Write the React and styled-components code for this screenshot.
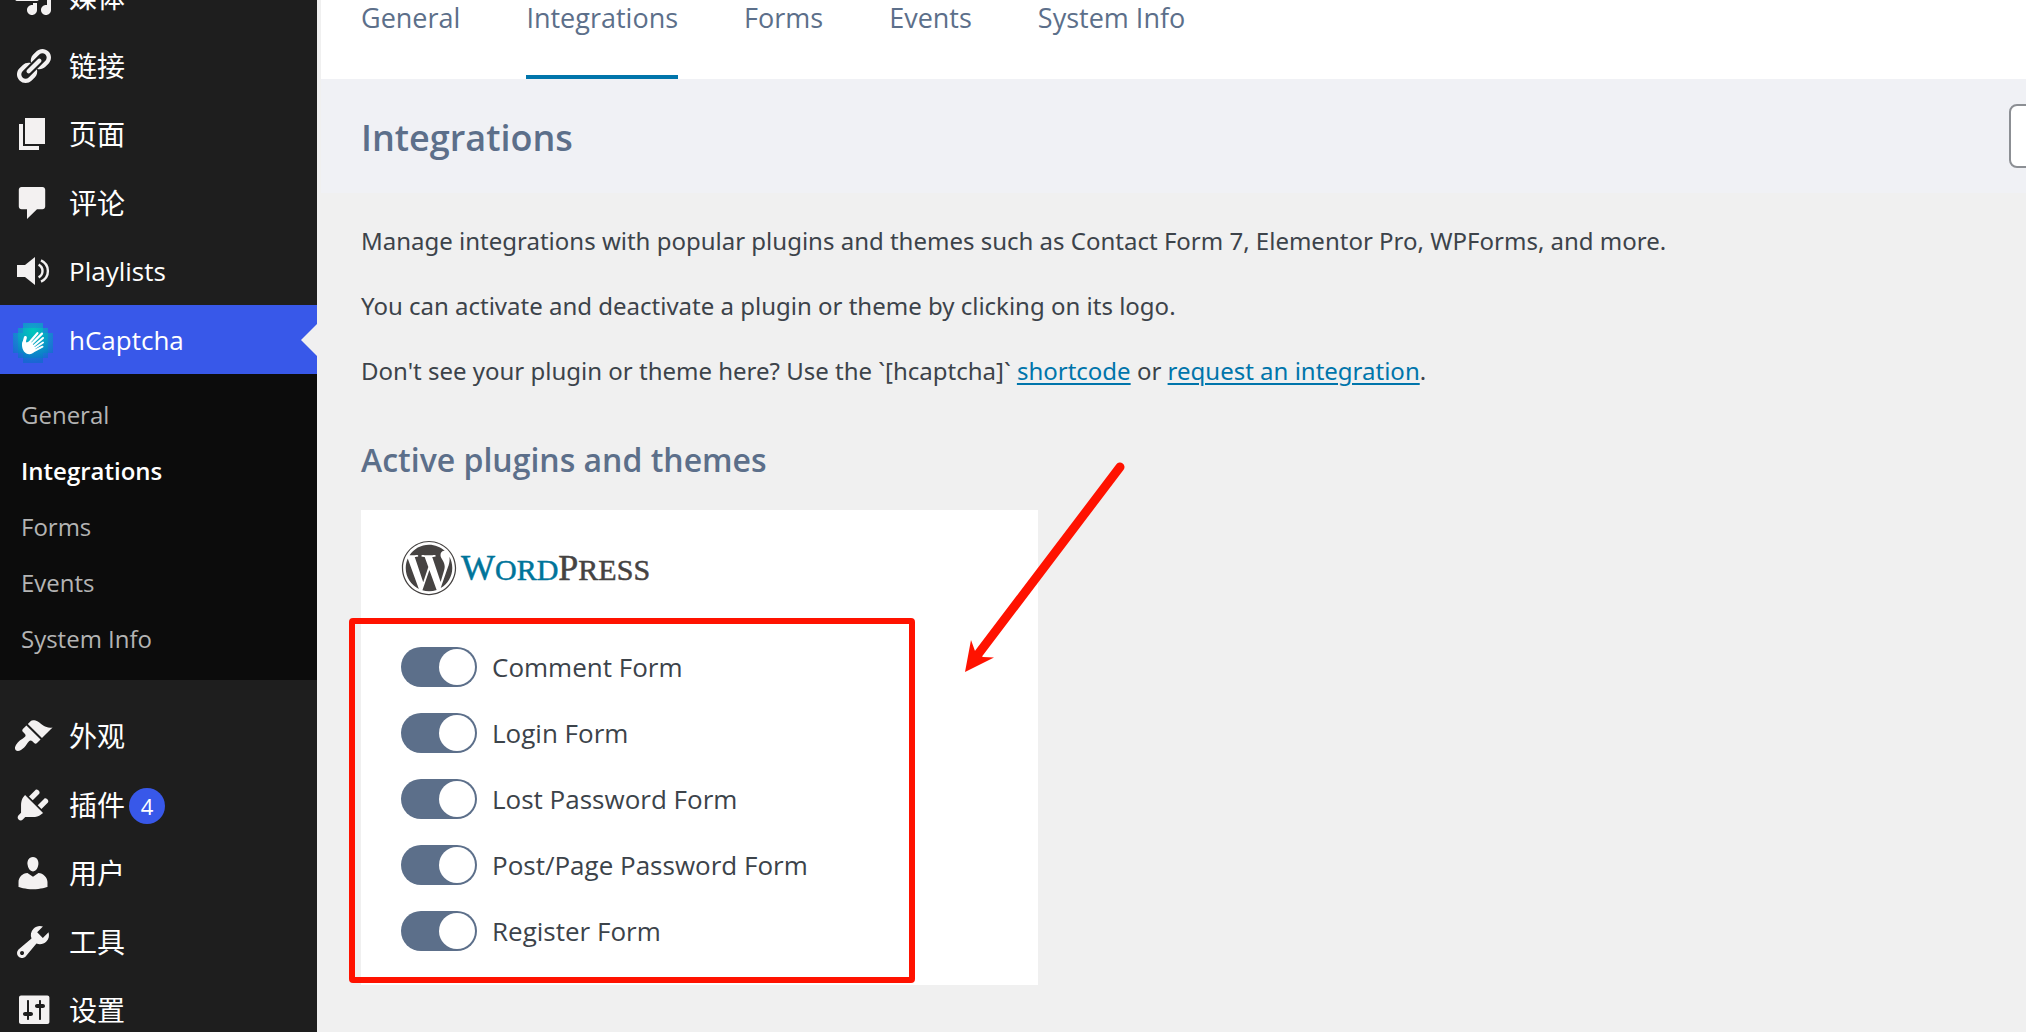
import React from "react";
import styled, { createGlobalStyle } from "styled-components";
import { FaWordpress } from "react-icons/fa";

const paths = {
  media:
    "M13 11V4c0-.55-.45-1-1-1h-1.67L9 1H5L3.67 3H2c-.55 0-1 .45-1 1v7c0 .55.45 1 1 1h10c.55 0 1-.45 1-1zM7 4.5c1.38 0 2.5 1.12 2.5 2.5S8.38 9.5 7 9.5 4.5 8.38 4.5 7 5.62 4.5 7 4.5zM14 6h5v10.5c0 1.38-1.12 2.5-2.5 2.5S14 17.88 14 16.5s1.12-2.5 2.5-2.5c.17 0 .34.02.5.05V9h-3V6zm-4 8.05V13h2v3.5c0 1.38-1.12 2.5-2.5 2.5S7 17.88 7 16.5 8.12 14 9.5 14c.17 0 .34.02.5.05z",
  links:
    "M17.74 2.76c1.68 1.69 1.68 4.41 0 6.1l-1.53 1.52c-1.12 1.12-2.7 1.47-4.14 1.09l2.62-2.61.76-.77.76-.76c.84-.84.84-2.2 0-3.04-.84-.85-2.2-.85-3.04 0l-.77.76-3.38 3.38c-.37-1.44-.02-3.02 1.1-4.14l1.52-1.53c1.69-1.68 4.42-1.68 6.1 0zM8.59 13.43l5.34-5.34c.42-.42.42-1.1 0-1.52-.44-.43-1.13-.39-1.53 0l-5.33 5.34c-.42.42-.42 1.1 0 1.52.44.43 1.13.39 1.52 0zm-.76 2.29l4.14-4.15c.38 1.44.03 3.02-1.09 4.14l-1.52 1.53c-1.69 1.68-4.41 1.68-6.1 0-1.68-1.68-1.68-4.42 0-6.1l1.53-1.52c1.12-1.12 2.7-1.47 4.14-1.1l-4.14 4.15c-.85.84-.85 2.2 0 3.05.84.84 2.2.84 3.04 0z",
  page: "M6 15V2h10v13H6zm-1 1h8v2H3V5h2v11z",
  comments:
    "M4.3 2h10.4c.8 0 1.4.6 1.4 1.4v8.3c0 .8-.6 1.4-1.4 1.4H12L7 18v-4.9H4.3c-.8 0-1.4-.6-1.4-1.4V3.4C2.9 2.6 3.5 2 4.3 2z",
  appearance:
    "M14.48 11.06L7.41 3.99l1.5-1.5c.5-.56 2.3-.47 3.51.32 1.21.8 1.43 1.28 2.91 2.1 1.18.64 2.45 1.26 4.45.85zm-.71.71L6.7 4.7 4.93 6.47c-.39.39-.39 1.02 0 1.41l1.06 1.06c.39.39.39 1.03 0 1.42-.6.6-1.43 1.11-2.21 1.69-.35.26-.7.53-1.01.84C1.43 14.23.4 16.08 1.4 17.07c.99 1 2.84-.03 4.18-1.36.31-.31.58-.66.85-1.02.57-.78 1.08-1.61 1.69-2.21.39-.39 1.02-.39 1.41 0l1.06 1.06c.39.39 1.02.39 1.41 0z",
  plugins:
    "M13.11 4.36L9.87 7.6 8 5.73l3.24-3.24c.35-.34 1.05-.2 1.56.32.52.51.66 1.21.31 1.55zm-8 1.77l.91-1.12 9.01 9.01-1.19.84c-.71.71-2.63 1.16-3.82 1.16H6.14L4.9 17.26c-.59.59-1.54.59-2.12 0-.59-.58-.59-1.53 0-2.12l1.24-1.24v-3.88c0-1.13.4-3.19 1.09-3.89zm7.26 3.97l3.24-3.24c.34-.35 1.04-.21 1.55.31.52.51.66 1.21.31 1.55l-3.24 3.25z",
  users:
    "M10 9.25c-2.27 0-2.73-3.44-2.73-3.44C7 4.02 7.82 2 9.97 2c2.16 0 2.98 2.02 2.71 3.81 0 0-.41 3.44-2.68 3.44zm0 2.57L12.72 10c2.39 0 4.52 2.33 4.52 4.53v2.49s-3.65 1.13-7.24 1.13c-3.65 0-7.24-1.13-7.24-1.13v-2.49c0-2.25 1.94-4.48 4.47-4.48z",
  tools:
    "M16.68 9.77c-1.34 1.34-3.3 1.67-4.95.99l-5.41 6.52c-.99.99-2.59.99-3.58 0s-.99-2.59 0-3.57l6.52-5.42c-.68-1.65-.35-3.61.99-4.95 1.28-1.28 3.12-1.62 4.72-1.06l-2.89 2.89 2.82 2.82 2.86-2.87c.53 1.58.18 3.39-1.08 4.65zM3.81 16.21c.4.39 1.04.39 1.43 0 .4-.4.4-1.04 0-1.43-.39-.4-1.03-.4-1.43 0-.39.39-.39 1.03 0 1.43z",
  settings:
    "M18.2 16V3.7c0-.55-.45-1-1-1H4c-.55 0-1 .45-1 1V16c0 .55.45 1 1 1h13.2c.55 0 1-.45 1-1zM8 11h1c.55 0 1 .45 1 1s-.45 1-1 1H8v1.5c0 .28-.22.5-.5.5s-.5-.22-.5-.5V13H6c-.55 0-1-.45-1-1s.45-1 1-1h1V5.5c0-.28.22-.5.5-.5s.5.22.5.5V11zm5-2h-1c-.55 0-1-.45-1-1s.45-1 1-1h1V5.5c0-.28.22-.5.5-.5s.5.22.5.5V7h1c.55 0 1 .45 1 1s-.45 1-1 1h-1v5.5c0 .28-.22.5-.5.5s-.5-.22-.5-.5V9z",
};

const DashIcon = ({ name }) => (
  <svg width="40" height="40" viewBox="0 0 20 20" fill="#f3f1f1" aria-hidden="true">
    <path d={paths[name]} />
  </svg>
);

const VolumeIcon = () => (
  <svg width="40" height="40" viewBox="0 0 20 20" aria-hidden="true">
    <path d="M2 7h4l5-4v14l-5-4H2z" fill="#f3f1f1" />
    <g fill="none" stroke="#f3f1f1" strokeWidth="1.2">
      <path d="M12.8 6.8c2.6 1.4 2.6 5 0 6.4" />
      <path d="M14 4.7c4.6 2.2 4.6 8.4 0 10.6" />
    </g>
  </svg>
);

const HCaptchaIcon = () => (
  <svg width="40" height="46" viewBox="0 -6 40 46" aria-hidden="true">
    <defs>
      <radialGradient id="hcap" cx="20" cy="8" r="31" gradientUnits="userSpaceOnUse">
        <stop offset="0" stopColor="#00c8bb" />
        <stop offset="0.5" stopColor="#0a9fc6" />
        <stop offset="1" stopColor="#0d6ccb" />
      </radialGradient>
    </defs>
    <g fill="url(#hcap)" shapeRendering="crispEdges">
      <path
        opacity="0.7"
        d="M10 0h20v5h5v5h5v20h-5v5h-5v5H10v-5H5v-5H0V10h5V5h5z"
      />
      <path d="M10 5h20v5h5v20h-5v5H10v-5H5V10h5z" />
    </g>
    <g stroke="#fff" strokeLinecap="round" fill="none">
      <path d="M16 20l8.400-9.800" strokeWidth="2.2" />
      <path d="M18 21.500l11-10.900" strokeWidth="2.2" />
      <path d="M20 23.500l10-8.500" strokeWidth="2.1" />
      <path d="M20.500 26l9.500-6.500" strokeWidth="2" />
      <path d="M20 28.500l9.500-4.800" strokeWidth="2" />
      <path d="M12.400 14.500l-1.900 7" strokeWidth="3" />
    </g>
    <path
      d="M9 22c0-2.500 1-4.500 2.500-6l2 3.500 4-1.500 4.500 6.500c1 2.500-1.500 6.500-5.500 6.700C12 31.300 9 27 9 22z"
      fill="#fff"
    />
  </svg>
);

const SideLink = ({ icon, label, cjk, badge, current }) => (
  <SideItem>
    <SideAnchor href="#" $current={current}>
      {icon}
      <SideLabel $cjk={cjk}>{label}</SideLabel>
      {badge && <Badge>{badge}</Badge>}
    </SideAnchor>
  </SideItem>
);

const submenu = ["General", "Integrations", "Forms", "Events", "System Info"];

const forms = [
  "Comment Form",
  "Login Form",
  "Lost Password Form",
  "Post/Page Password Form",
  "Register Form",
];

const App = () => {
  return (
    <>
      <GlobalStyle />
      <Layout>
        <Sidebar>
          <TopMenu>
            <SideLink icon={<DashIcon name="media" />} label="媒体" cjk />
            <SideLink icon={<DashIcon name="links" />} label="链接" cjk />
            <SideLink icon={<DashIcon name="page" />} label="页面" cjk />
            <SideLink icon={<DashIcon name="comments" />} label="评论" cjk />
            <SideLink icon={<VolumeIcon />} label="Playlists" />
            <SideLink icon={<HCaptchaIcon />} label="hCaptcha" current />
          </TopMenu>
          <Submenu>
            {submenu.map((item) => (
              <li key={item}>
                <SubmenuLink href="#" $current={item === "Integrations"}>
                  {item}
                </SubmenuLink>
              </li>
            ))}
          </Submenu>
          <BottomMenu>
            <SideLink icon={<DashIcon name="appearance" />} label="外观" cjk />
            <SideLink icon={<DashIcon name="plugins" />} label="插件" cjk badge="4" />
            <SideLink icon={<DashIcon name="users" />} label="用户" cjk />
            <SideLink icon={<DashIcon name="tools" />} label="工具" cjk />
            <SideLink icon={<DashIcon name="settings" />} label="设置" cjk />
          </BottomMenu>
        </Sidebar>
        <Main>
          <Tabs>
            {submenu.map((item) => (
              <Tab key={item} href="#" $current={item === "Integrations"}>
                {item}
              </Tab>
            ))}
          </Tabs>
          <HeaderBar>
            <PageTitle>Integrations</PageTitle>
            <SearchInput type="search" aria-label="Search plugins and themes" />
          </HeaderBar>
          <Content>
            <Intro>
              <p>
                Manage integrations with popular plugins and themes such as
                Contact Form 7, Elementor Pro, WPForms, and more.
              </p>
              <p>
                You can activate and deactivate a plugin or theme by clicking on
                its logo.
              </p>
              <p>
                Don't see your plugin or theme here? Use the `[hcaptcha]`{" "}
                <a href="#">shortcode</a> or{" "}
                <a href="#">request an integration</a>.
              </p>
            </Intro>
            <SectionTitle>Active plugins and themes</SectionTitle>
            <Card>
              <Logo>
                <FaWordpress size={56} color="#464342" />
                <Wordmark>
                  <Blue>
                    W<small>ORD</small>
                  </Blue>
                  P<small>RESS</small>
                </Wordmark>
              </Logo>
              <ToggleList>
                {forms.map((form) => (
                  <ToggleLabel key={form}>
                    <Toggle type="checkbox" defaultChecked />
                    {form}
                  </ToggleLabel>
                ))}
              </ToggleList>
              <Arrow width="170" height="220" viewBox="0 0 170 220" aria-hidden="true">
                <path d="M160 9L19 195" stroke="#ff1200" strokeWidth="9" strokeLinecap="round" />
                <path d="M5 214l6-32 4 11 8 6 11 .5z" fill="#ff1200" />
              </Arrow>
            </Card>
          </Content>
        </Main>
      </Layout>
    </>
  );
};

const GlobalStyle = createGlobalStyle`
  *, *::before, *::after {
    box-sizing: border-box;
  }
  body {
    margin: 0;
    background-color: #f0f0f0;
    color: #3c434a;
    font-family: "Open Sans", "Noto Sans CJK SC", sans-serif;
  }
  ul, p, h1, h2 {
    margin: 0;
    padding: 0;
  }
  ul {
    list-style: none;
  }
  a {
    text-decoration: none;
  }
`;

const Layout = styled.div`
  display: flex;
  gap: 4px;
  height: 100vh;
  overflow: hidden;
`;

const Sidebar = styled.nav`
  flex: 0 0 317px;
  background-color: #1e1e1e;
`;

const SideItem = styled.li`
  height: 68px;
`;

const TopMenu = styled.ul`
  /* the menu is scrolled up under the window edge */
  margin-top: -37px;
  ${SideItem}:nth-child(even) {
    height: 69px;
  }
`;

const BottomMenu = styled.ul`
  padding-top: 22px;
  ${SideItem}:nth-child(even) {
    height: 69px;
  }
`;

const SideAnchor = styled.a`
  position: relative;
  display: flex;
  align-items: center;
  height: 100%;
  padding-left: 13px;
  background-color: ${({ $current }) => ($current ? "#3858e9" : "transparent")};
  svg {
    flex: none;
    margin-right: 16px;
  }
  &::after {
    content: "";
    display: ${({ $current }) => ($current ? "block" : "none")};
    position: absolute;
    right: 0;
    top: calc(50% - 16px);
    border: 16px solid transparent;
    border-left-width: 0;
    border-right-color: #f0f0f0;
  }
`;

const SideLabel = styled.span`
  color: #fff;
  font-size: ${({ $cjk }) => ($cjk ? "28px" : "26px")};
  line-height: 40px;
`;

const Badge = styled.span`
  display: flex;
  align-items: center;
  justify-content: center;
  width: 36px;
  height: 36px;
  margin: 3px 0 0 4px;
  border-radius: 50%;
  background-color: #3858e9;
  color: #fff;
  font-size: 22px;
`;

const Submenu = styled.ul`
  padding: 13px 0;
  background-color: #0c0c0c;
`;

const SubmenuLink = styled.a`
  display: block;
  padding-left: 21px;
  color: ${({ $current }) => ($current ? "#fff" : "#b4b4b4")};
  font-size: 24px;
  font-weight: ${({ $current }) => ($current ? 600 : 400)};
  line-height: 56px;
`;

const Main = styled.main`
  flex: 1;
  min-width: 0;
`;

const Tabs = styled.div`
  display: flex;
  gap: 66px;
  padding-left: 40px;
  background-color: #fff;
`;

const Tab = styled.a`
  padding-bottom: 39px;
  border-bottom: 4px solid
    ${({ $current }) => ($current ? "#0075ab" : "transparent")};
  color: #5c6f8a;
  font-size: 27px;
  line-height: 36px;
`;

const HeaderBar = styled.header`
  display: flex;
  align-items: center;
  justify-content: space-between;
  height: 114px;
  padding-left: 40px;
  background-color: #f0f1f5;
`;

const PageTitle = styled.h1`
  padding-top: 4px;
  color: #5c6f8a;
  font-size: 36px;
  font-weight: 600;
  line-height: 48px;
`;

/* runs past the right edge of the window */
const SearchInput = styled.input`
  flex: none;
  width: 400px;
  height: 64px;
  margin-right: -383px;
  padding: 0 16px;
  border: 2px solid #8c8f94;
  border-radius: 8px;
  background-color: #fff;
  font-size: 24px;
`;

const Content = styled.div`
  padding: 28px 40px 40px;
`;

const Intro = styled.div`
  display: flex;
  flex-direction: column;
  gap: 26px;
  font-family: "Noto Sans", sans-serif;
  font-size: 24px;
  line-height: 39px;
  a {
    color: #0075ab;
    text-decoration: underline;
    text-decoration-thickness: 2px;
    text-underline-offset: 3px;
  }
`;

const SectionTitle = styled.h2`
  margin: 48px 0 28px;
  color: #5c6f8a;
  font-size: 32px;
  font-weight: 600;
  line-height: 44px;
`;

const Card = styled.section`
  position: relative;
  max-width: 677px;
  padding: 30px 40px 34px;
  background-color: #fff;
`;

const Logo = styled.div`
  display: flex;
  align-items: center;
  gap: 4px;
  height: 56px;
  margin-bottom: 51px;
`;

const Wordmark = styled.span`
  padding-top: 2px;
  color: #464342;
  font-family: "Liberation Serif", serif;
  font-size: 36px;
  line-height: 40px;
  -webkit-text-stroke: 0.5px currentColor;
  small {
    font-size: 30px;
  }
`;

const Blue = styled.span`
  color: #00749a;
`;

const ToggleList = styled.div`
  position: relative;
  display: flex;
  flex-direction: column;
  align-items: flex-start;
  gap: 26px;
  &::after {
    content: "";
    position: absolute;
    top: -29px;
    bottom: -32px;
    left: -52px;
    width: 566px;
    border: 6px solid #ff1200;
    border-radius: 4px;
    pointer-events: none;
  }
`;

const ToggleLabel = styled.label`
  display: flex;
  align-items: center;
  gap: 15px;
  font-size: 26px;
  line-height: 40px;
`;

const Toggle = styled.input`
  appearance: none;
  position: relative;
  width: 76px;
  height: 40px;
  margin: 0;
  border-radius: 20px;
  background-color: #c3c7cc;
  &::after {
    content: "";
    position: absolute;
    top: 2px;
    left: 2px;
    width: 36px;
    height: 36px;
    border-radius: 50%;
    background-color: #fff;
  }
  &:checked {
    background-color: #5c6f8a;
  }
  &:checked::after {
    left: 38px;
  }
`;

const Arrow = styled.svg`
  position: absolute;
  top: -52px;
  left: 599px;
  pointer-events: none;
`;

export default App;
